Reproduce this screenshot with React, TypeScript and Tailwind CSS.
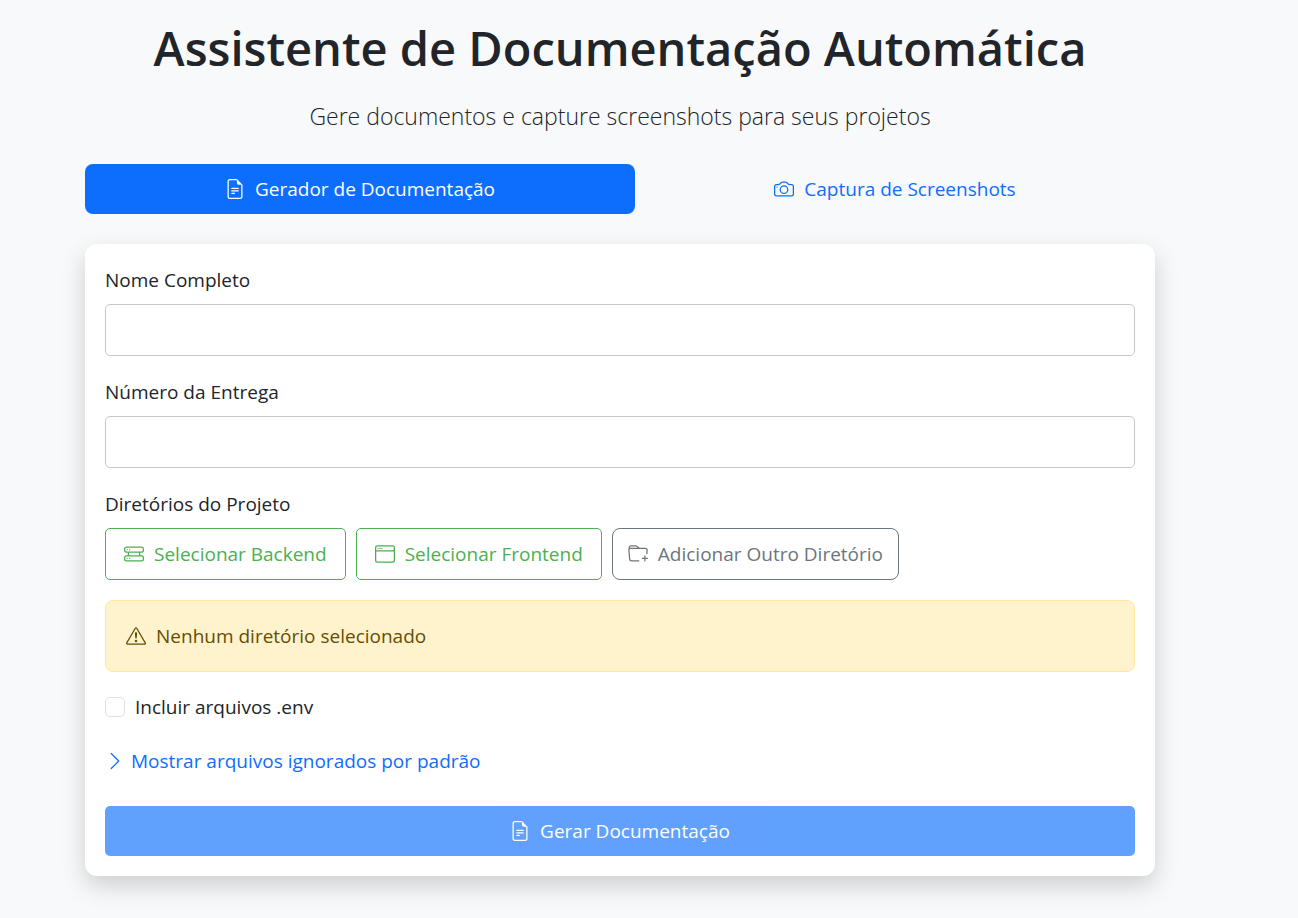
import { useState } from 'react';
import {
  BsCamera,
  BsChevronRight,
  BsExclamationTriangle,
  BsFileEarmarkText,
  BsFolderPlus,
  BsHddRack,
  BsWindow,
} from 'react-icons/bs';

function Field({ id, label }: { id: string; label: string }) {
  return (
    <div className="mb-5">
      <label htmlFor={id} className="mb-2 block leading-8">
        {label}
      </label>
      <input
        id={id}
        type="text"
        className="block h-[52px] w-full rounded-[5px] border border-[#c8c8c8] bg-white px-4 outline-none focus:border-[#86b7fe]"
      />
    </div>
  );
}

export default function App() {
  const [includeEnv, setIncludeEnv] = useState(false);

  return (
    <div className="min-h-screen bg-[#f8f9fa] pt-[18px] pr-[143px] pb-10 pl-[85px] font-['Open_Sans',sans-serif] text-[19px] leading-[30px] text-[#212529]">
      <header className="mb-[30px] text-center">
        <h1 className="mb-5 text-[47px] leading-[60px] font-semibold">
          Assistente de Documentação Automática
        </h1>
        <p className="text-[23px] leading-9 font-light">
          Gere documentos e capture screenshots para seus projetos
        </p>
      </header>

      <nav className="mb-[30px] grid grid-cols-[550fr_520fr]">
        <button
          type="button"
          className="flex h-[50px] items-center justify-center gap-2.5 rounded-lg bg-[#0d6efd] text-white"
        >
          <BsFileEarmarkText className="size-5" />
          Gerador de Documentação
        </button>
        <button
          type="button"
          className="flex h-[50px] items-center justify-center gap-2.5 rounded-lg text-[#0d6efd]"
        >
          <BsCamera className="size-5" />
          Captura de Screenshots
        </button>
      </nav>

      <main className="rounded-xl bg-white p-5 shadow-[0_10px_25px_rgba(0,0,0,0.17)]">
        <form onSubmit={(e) => e.preventDefault()}>
          <Field id="nome" label="Nome Completo" />
          <Field id="entrega" label="Número da Entrega" />

          <fieldset>
            <legend className="mb-2 leading-8">Diretórios do Projeto</legend>
            <div className="flex flex-wrap gap-2.5">
              <button
                type="button"
                className="flex h-[52px] items-center gap-2.5 rounded-[5px] border border-[#4caf50] px-[18px] text-[#4caf50]"
              >
                <BsHddRack className="size-5" />
                Selecionar Backend
              </button>
              <button
                type="button"
                className="flex h-[52px] items-center gap-2.5 rounded-[5px] border border-[#4caf50] px-[18px] text-[#4caf50]"
              >
                <BsWindow className="size-5" />
                Selecionar Frontend
              </button>
              <button
                type="button"
                className="flex h-[52px] items-center gap-2.5 rounded-lg border border-[#6c757d] px-[15px] text-[#6c757d]"
              >
                <BsFolderPlus className="size-5" />
                Adicionar Outro Diretório
              </button>
            </div>
          </fieldset>

          <div
            role="alert"
            className="mt-5 flex items-center gap-2.5 rounded-lg border border-[#ffe69c] bg-[#fff3cd] p-5 text-[#664d03]"
          >
            <BsExclamationTriangle className="size-5" />
            Nenhum diretório selecionado
          </div>

          <div className="mt-5 flex items-center gap-2.5">
            <input
              id="env"
              type="checkbox"
              checked={includeEnv}
              onChange={(e) => setIncludeEnv(e.target.checked)}
              className="size-5 appearance-none rounded-[5px] border border-[#dee2e6] bg-white checked:border-[#0d6efd] checked:bg-[#0d6efd]"
            />
            <label htmlFor="env">Incluir arquivos .env</label>
          </div>

          <button type="button" className="mt-6 flex items-center gap-1.5 text-[#0d6efd]">
            <BsChevronRight className="size-5" />
            Mostrar arquivos ignorados por padrão
          </button>

          <button
            type="submit"
            disabled
            className="mt-[30px] flex h-[50px] w-full items-center justify-center gap-2.5 rounded-[5px] bg-[#0d6efd] text-white opacity-65"
          >
            <BsFileEarmarkText className="size-5" />
            Gerar Documentação
          </button>
        </form>
      </main>
    </div>
  );
}
